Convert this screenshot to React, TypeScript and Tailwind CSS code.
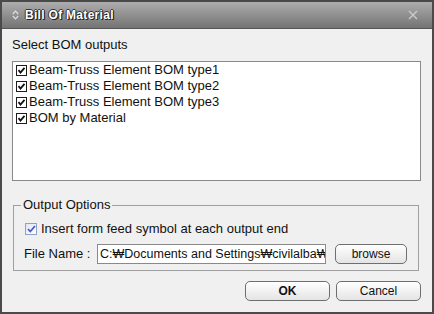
const items = [
  "Beam-Truss Element BOM type1",
  "Beam-Truss Element BOM type2",
  "Beam-Truss Element BOM type3",
  "BOM by Material",
];

function SmallCheck() {
  return (
    <span className="w-[11px] h-[11px] border border-[#1c1c1c] bg-white flex items-center justify-center shrink-0">
      <svg width="9" height="9" viewBox="0 0 9 9">
        <path d="M1.5 4.2 L3.5 6.5 L7.5 1.8" stroke="#111" strokeWidth="1.8" fill="none" />
      </svg>
    </span>
  );
}

function Btn({ label, bold }: { label: string; bold?: boolean }) {
  return (
    <div
      className={`h-[20px] rounded-[5px] border border-[#6f6f6f] bg-gradient-to-b from-white to-[#e4e4e4] flex items-center justify-center text-[12px] text-[#111] ${bold ? "font-bold" : ""}`}
    >
      {label}
    </div>
  );
}

export default function App() {
  return (
    <div
      className="w-[434px] h-[314px] bg-[#4a4a4a] p-[2px] flex flex-col"
      style={{ fontFamily: '"Liberation Sans", Arial, sans-serif' }}
    >
      {/* title bar */}
      <div className="h-[27px] bg-gradient-to-b from-[#adadad] to-[#747474] border-b border-[#555] flex items-center pl-[10px] pr-[14px]">
        <svg width="7" height="10" viewBox="0 0 7 10" className="mr-[6px]">
          <path d="M0.8 4 L3.5 1.2 L6.2 4" stroke="#e0e0e0" strokeWidth="1.2" fill="none" />
          <path d="M0.8 6 L3.5 8.8 L6.2 6" stroke="#e0e0e0" strokeWidth="1.2" fill="none" />
        </svg>
        <span
          className="text-[12px] font-bold text-white tracking-[0.3px]"
          style={{ textShadow: "1px 1px 0 #222, -1px 0 0 #333, 0 -1px 0 #333, 1px 0 0 #333" }}
        >
          Bill Of Material
        </span>
        <div className="flex-1" />
        <svg width="10" height="10" viewBox="0 0 10 10">
          <path d="M1 1 L9 9 M9 1 L1 9" stroke="#c8c8c8" strokeWidth="1.5" />
        </svg>
      </div>

      {/* body */}
      <div className="flex-1 bg-[#f0f0f0] flex flex-col text-[13px] text-[#111] pl-[10px] pr-[11px]">
        <div className="pt-[8px] h-[32px] leading-[16px]">Select BOM outputs</div>

        <div className="h-[120px] bg-white border border-[#8a8a8a] pl-[3px] flex flex-col">
          {items.map((t) => (
            <div key={t} className="h-[16px] flex items-center gap-[2px] leading-[16px]">
              <SmallCheck />
              <span>{t}</span>
            </div>
          ))}
        </div>

        {/* group */}
        <div className="mt-[24px] ml-[1px] mr-[2px] h-[66px] border border-[#a0a0a0] relative flex flex-col px-[11px]">
          <span className="absolute -top-[9px] left-[7px] bg-[#f0f0f0] px-[2px] text-[13px] leading-[16px]">
            Output Options
          </span>
          <div className="mt-[16px] flex items-center gap-[4px] h-[13px]">
            <span className="w-[12px] h-[12px] border border-[#8da2c5] bg-gradient-to-br from-[#dfe6f3] to-white flex items-center justify-center">
              <svg width="9" height="8" viewBox="0 0 9 8">
                <path d="M1 4 L3.3 6.5 L8 1" stroke="#4a59c7" strokeWidth="1.8" fill="none" />
              </svg>
            </span>
            <span className="leading-[16px]">Insert form feed symbol at each output end</span>
          </div>
          <div className="mt-[9px] flex items-center">
            <span className="w-[73px] -ml-[1px]">File Name :</span>
            <div className="w-[229px] h-[20px] border border-[#8a8a8a] bg-white flex items-center pl-[2px] overflow-hidden whitespace-nowrap text-[12.5px]">
              C:₩Documents and Settings₩civilalba₩
            </div>
            <div className="ml-[9px] w-[72px]">
              <Btn label="browse" />
            </div>
          </div>
        </div>

        <div className="mt-[10px] flex justify-end gap-[6px]">
          <div className="w-[85px]">
            <Btn label="OK" bold />
          </div>
          <div className="w-[85px]">
            <Btn label="Cancel" />
          </div>
        </div>
      </div>
    </div>
  );
}
